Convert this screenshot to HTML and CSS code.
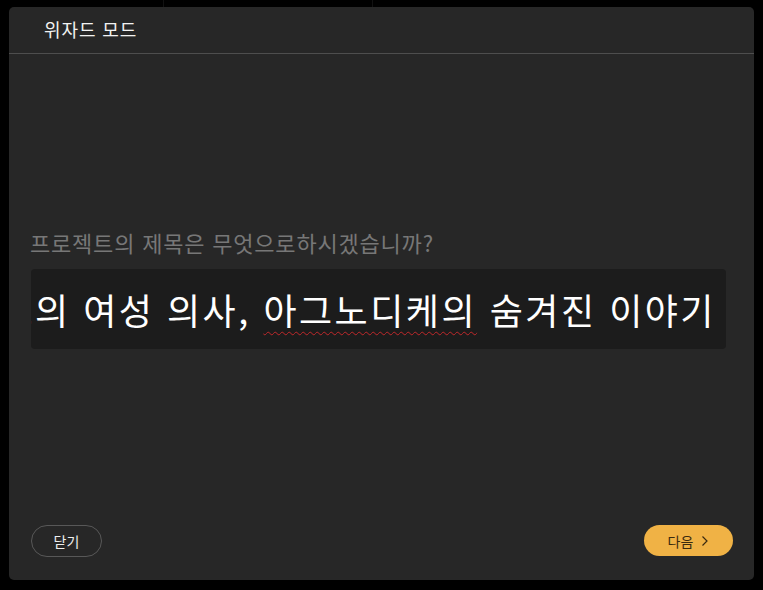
FILE: index.html
```html
<!DOCTYPE html>
<html lang="ko">
<head>
<meta charset="utf-8">
<link rel="stylesheet" href="styles.css">
</head>
<body>
<div class="topstrip"><span class="seg a"></span><span class="seg b"></span><span class="seg c"></span></div>
<div class="dialog">
  <div class="header"><span class="title">위자드 모드</span></div>
  <div class="body">
    <div class="question">프로젝트의 제목은 무엇으로하시겠습니까?</div>
    <div class="field"><span class="value">고대 그리스의 여성 의사, <span class="misspelled">아그노디케의</span> 숨겨진 이야기</span></div>
  </div>
  <div class="footer">
    <button class="btn btn-close">닫기</button>
    <button class="btn btn-next">다음 <svg class="chev" width="8" height="12" viewBox="0 0 8 12"><path d="M1.5 1.5 L6 6 L1.5 10.5" fill="none" stroke="#3a2a10" stroke-width="1.2"/></svg></button>
  </div>
</div>
</body>
</html>
```
FILE: styles.css
```css
html, body {
  margin: 0;
  padding: 0;
  background: #000;
  width: 763px;
  height: 590px;
  overflow: hidden;
  font-family: "Noto Sans CJK KR", "Noto Sans", sans-serif;
}
.topstrip {
  position: absolute;
  top: 0;
  left: 0;
  width: 763px;
  height: 7px;
  display: flex;
}
.seg { display: block; height: 7px; }
.seg.a { width: 163px; }
.seg.b { width: 208px; border-left: 1px solid #111; border-right: 1px solid #111; }
.seg.c { flex: 1; }
.dialog {
  position: absolute;
  left: 9px;
  top: 7px;
  width: 745px;
  height: 573px;
  background: #272727;
  border-radius: 5px;
  display: flex;
  flex-direction: column;
  overflow: hidden;
}
.header {
  height: 46px;
  border-bottom: 1px solid #4e4e4e;
  display: flex;
  align-items: center;
  padding-left: 35px;
  flex-shrink: 0;
}
.title {
  color: #f2f2f2;
  font-size: 18px;
  letter-spacing: 0.9px;
  margin-top: -2px;
}
.body {
  flex: 1;
  padding: 174px 28px 0 21px;
}
.question {
  color: #777;
  font-size: 22px;
  letter-spacing: 0.8px;
  line-height: 28px;
}
.field {
  margin-top: 13px;
  margin-left: 1px;
  height: 80px;
  background: #1c1c1c;
  border-radius: 4px;
  overflow: hidden;
  display: flex;
  justify-content: flex-end;
  align-items: center;
  padding-right: 12px;
  white-space: nowrap;
  box-sizing: border-box;
}
.value {
  color: #fff;
  font-size: 36px;
  letter-spacing: 2.5px;
  line-height: 40px;
  margin-top: 0;
  margin-right: -2px;
}
.misspelled {
  text-decoration: underline wavy #c0282a;
  text-decoration-thickness: 1px;
  text-underline-offset: 6px;
}
.footer {
  height: 55px;
  display: flex;
  justify-content: space-between;
  align-items: flex-start;
  padding: 0 21px 0 22px;
  flex-shrink: 0;
}
.btn {
  font-family: "Noto Sans CJK KR", sans-serif;
  font-size: 14px;
  border-radius: 16px;
  height: 32px;
  display: flex;
  align-items: center;
  justify-content: center;
  padding: 0;
  cursor: pointer;
}
.btn-close {
  width: 71px;
  background: transparent;
  border: 1px solid #585858;
  color: #eee;
}
.btn-next {
  width: 89px;
  height: 31px;
  background: #f0b245;
  border: none;
  color: #3a2a10;
  gap: 8px;
}
.chev { margin-top: 1px; }
```
